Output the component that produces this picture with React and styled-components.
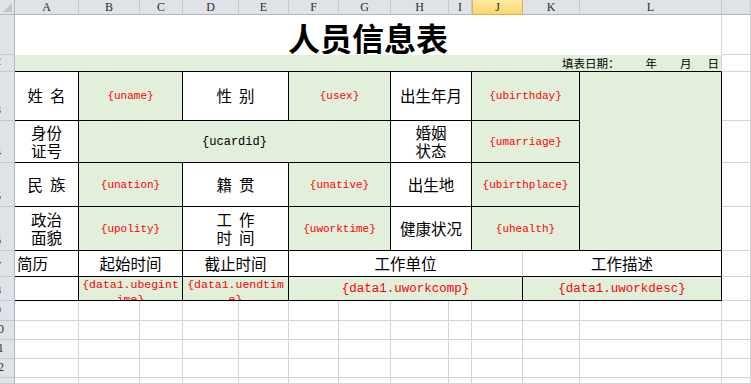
import React from 'react';
import styled, { createGlobalStyle } from 'styled-components';

const GlobalStyle = createGlobalStyle`
  html, body {
    margin: 0;
    padding: 0;
    background: #fff;
  }
  body {
    overflow: hidden;
  }
`;

const GREEN = '#e2efda';
const GRID = '#d4d4d4';
const INK = '#000';
const HEAD_BG = '#dfe3e8';
const HEAD_LINE = '#b1b7bf';
const HEAD_SEP = '#c4c9d0';

const Sheet = styled.div`
  display: grid;
  grid-template-columns: 15px 64px 61px 43px 56px 50px 50px 52px 58px 23px 51px 57px 142px 1fr;
  grid-template-rows: 15px 40px 17px 49px 42px 44px 44px 26px 24px 20px 19px 19px 19px 1fr;
  width: 751px;
  height: 384px;
  overflow: hidden;
  background: #fff;
  font-family: "Noto Sans CJK SC", sans-serif;
`;

const Corner = styled.div`
  grid-column: 1;
  grid-row: 1;
  background: ${HEAD_BG};
  border-right: 1px solid ${HEAD_LINE};
  border-bottom: 1px solid ${HEAD_LINE};
  box-sizing: border-box;
  svg {
    display: block;
  }
`;

const ColHead = styled.div`
  grid-row: 1;
  grid-column: ${p => p.$col};
  box-sizing: border-box;
  display: flex;
  align-items: center;
  justify-content: center;
  font: 12px "Liberation Serif", serif;
  color: #2b2b2b;
  background: ${p => (p.$active ? 'linear-gradient(#feeaa2, #f9d66e)' : HEAD_BG)};
  border-left: ${p => (p.$active ? '1px solid #e2b246' : 'none')};
  border-right: 1px solid ${p => (p.$active ? '#e2b246' : HEAD_SEP)};
  border-bottom: 1px solid ${p => (p.$active ? '#e2b246' : HEAD_LINE)};
`;

const RowHead = styled.div`
  grid-column: 1;
  grid-row: ${p => p.$row};
  box-sizing: border-box;
  background: ${HEAD_BG};
  border-right: 1px solid ${HEAD_LINE};
  border-bottom: 1px solid ${HEAD_SEP};
  overflow: hidden;
  display: flex;
  align-items: flex-end;
`;

const RowNum = styled.span`
  flex: none;
  width: 30px;
  margin-left: -17px;
  padding-bottom: 3px;
  text-align: center;
  font: 12px/13px "Liberation Serif", serif;
  color: #2b2b2b;
`;

const Cell = styled.div`
  grid-column: ${p => p.$col} / span ${p => p.$span || 1};
  grid-row: ${p => p.$row} / span ${p => p.$rows || 1};
  box-sizing: border-box;
  min-width: 0;
  overflow: hidden;
  display: flex;
  align-items: ${p => p.$valign || 'center'};
  justify-content: ${p => p.$align || 'center'};
  padding: 0 2px;
  text-align: center;
  background: ${p => p.$fill || '#fff'};
  border-right: 1px solid ${p => p.$r || GRID};
  border-bottom: 1px solid ${p => p.$b || GRID};
`;

const Title = styled.span`
  font-size: 32px;
  font-weight: 700;
  line-height: 36px;
  color: #000;
  padding-top: 5px;
`;

const DateLine = styled.span`
  font-size: 11.5px;
  line-height: 16px;
  color: #000;
  white-space: nowrap;
`;

const DatePart = styled.span`
  margin-left: ${p => p.$gap || 0}px;
`;

const Label = styled.span`
  font-size: 15.5px;
  line-height: 17.5px;
  color: #000;
  white-space: pre-line;
  word-spacing: 3.5px;
`;

const Field = styled.span`
  font-family: "Liberation Mono", monospace;
  font-size: ${p => p.$size || 11}px;
  line-height: ${p => (p.$wrap ? '15px' : 'normal')};
  color: ${p => (p.$dark ? '#000' : '#ff0000')};
  word-break: break-all;
`;

const label = (col, span, text, extra = {}) => ({ col, span, kind: 'label', text, ...extra });
const field = (col, span, text, extra = {}) => ({ col, span, kind: 'field', text, fill: GREEN, ...extra });

// excel row number -> cells (col 2 = A ... col 13 = L)
const tableRows = [
  {
    row: 3,
    cells: [
      label(2, 1, '姓 名'),
      field(3, 2, '{uname}'),
      label(5, 2, '性 别'),
      field(7, 2, '{usex}'),
      label(9, 2, '出生年月'),
      field(11, 2, '{ubirthday}'),
      { col: 13, span: 1, rows: 4, kind: 'photo', fill: GREEN },
    ],
  },
  {
    row: 4,
    cells: [
      label(2, 1, '身份\n证号'),
      field(3, 6, '{ucardid}', { dark: true, size: 12 }),
      label(9, 2, '婚姻\n状态'),
      field(11, 2, '{umarriage}'),
    ],
  },
  {
    row: 5,
    cells: [
      label(2, 1, '民 族'),
      field(3, 2, '{unation}'),
      label(5, 2, '籍 贯'),
      field(7, 2, '{unative}'),
      label(9, 2, '出生地'),
      field(11, 2, '{ubirthplace}'),
    ],
  },
  {
    row: 6,
    cells: [
      label(2, 1, '政治\n面貌'),
      field(3, 2, '{upolity}'),
      label(5, 2, '工 作\n时 间'),
      field(7, 2, '{uworktime}'),
      label(9, 2, '健康状况'),
      field(11, 2, '{uhealth}'),
    ],
  },
  {
    row: 7,
    cells: [
      label(2, 1, '简历', { align: 'flex-start' }),
      label(3, 2, '起始时间'),
      label(5, 2, '截止时间'),
      label(7, 5, '工作单位', { r: GRID }),
      label(12, 2, '工作描述'),
    ],
  },
  {
    row: 8,
    cells: [
      { col: 2, span: 1, kind: 'empty' },
      field(3, 2, '{data1.ubegintime}', { wrap: true, size: 11.5 }),
      field(5, 2, '{data1.uendtime}', { wrap: true, size: 11.5 }),
      field(7, 5, '{data1.uworkcomp}', { size: 12.5 }),
      field(12, 2, '{data1.uworkdesc}', { size: 12.5 }),
    ],
  },
];

const letters = ['A', 'B', 'C', 'D', 'E', 'F', 'G', 'H', 'I', 'J', 'K', 'L', ''];

const renderContent = c => {
  if (c.kind === 'label') return <Label>{c.text}</Label>;
  if (c.kind === 'field')
    return (
      <Field $size={c.size} $dark={c.dark} $wrap={c.wrap}>
        {c.text}
      </Field>
    );
  return null;
};

const App = () => {
  return (
    <>
      <GlobalStyle />
      <Sheet>
        <Corner>
          <svg width="14" height="14" viewBox="0 0 14 14">
            <polygon points="12,3 12,12 3,12" fill="#bfc4cb" />
          </svg>
        </Corner>
        {letters.map((l, i) => (
          <ColHead key={i} $col={i + 2} $active={l === 'J'}>
            {l}
          </ColHead>
        ))}
        {Array.from({ length: 13 }, (_, i) => (
          <RowHead key={i} $row={i + 2}>
            <RowNum>{i + 1}</RowNum>
          </RowHead>
        ))}

        <Cell $col={2} $span={12} $row={2} $b="#fff">
          <Title>人员信息表</Title>
        </Cell>
        <Cell $col={14} $row={2} />

        <Cell $col={2} $span={12} $row={3} $fill={GREEN} $b={INK} $align="flex-end">
          <DateLine>
            填表日期：
            <DatePart $gap={26}>年</DatePart>
            <DatePart $gap={23}>月</DatePart>
            <DatePart $gap={16}>日</DatePart>
          </DateLine>
        </Cell>
        <Cell $col={14} $row={3} />

        {tableRows.map(tr =>
          tr.cells.map(c => (
            <Cell
              key={`${tr.row}-${c.col}`}
              $col={c.col}
              $span={c.span}
              $row={tr.row + 1}
              $rows={c.rows}
              $fill={c.fill}
              $r={c.r || INK}
              $b={INK}
              $align={c.align}
              $valign={c.wrap ? 'flex-start' : 'center'}
            >
              {renderContent(c)}
            </Cell>
          ))
        )}
        {[4, 5, 6, 7, 8, 9].map(r => (
          <Cell key={`m-${r}`} $col={14} $row={r} />
        ))}

        {[10, 11, 12, 13, 14].map(r =>
          Array.from({ length: 13 }, (_, i) => <Cell key={`e-${r}-${i}`} $col={i + 2} $row={r} />)
        )}
      </Sheet>
    </>
  );
};

export default App;
